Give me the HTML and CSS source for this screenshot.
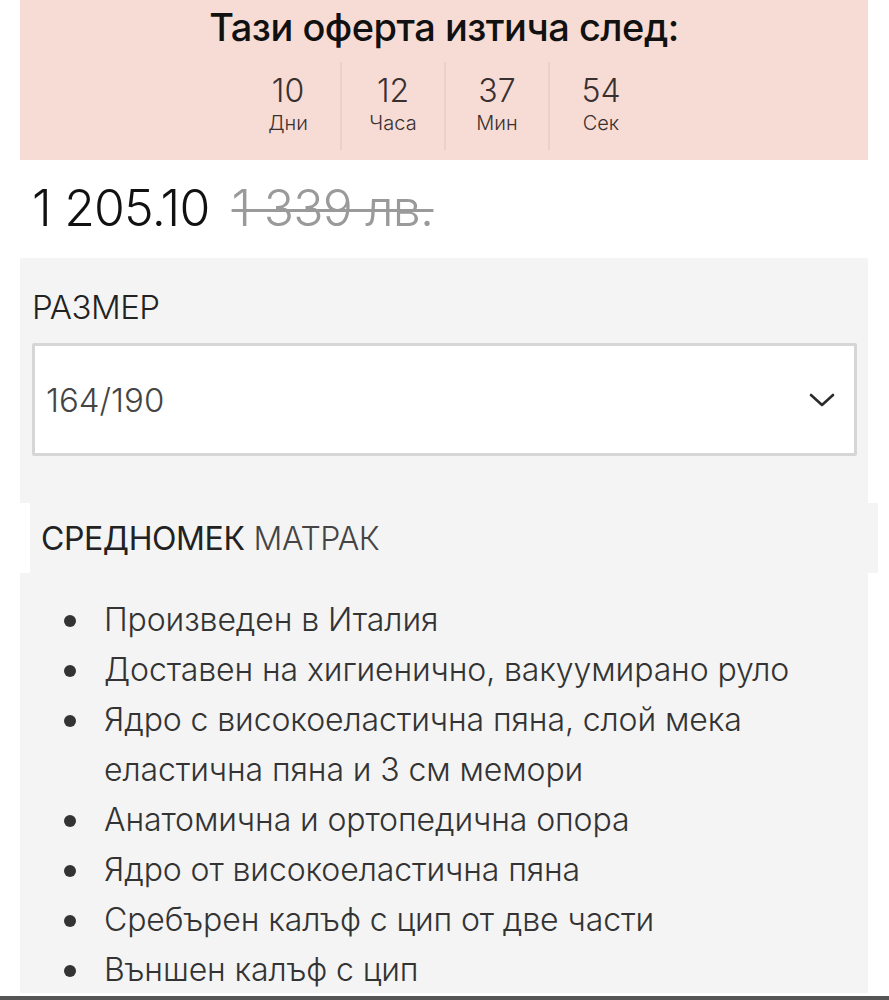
FILE: index.html
```html
<!DOCTYPE html>
<html lang="bg">
<head>
    <meta charset="UTF-8">
    <meta name="viewport" content="width=device-width, initial-scale=1.0">
    <title>Среднотвърд матрак</title>
    <link rel="stylesheet" href="styles.css">
</head>
<body>
    <div class="product">
        <div class="offer">
            <div class="offer-title">Тази оферта изтича след:</div>
            <div class="countdown">
                <div class="countdown-cell">
                    <div class="countdown-num">10</div>
                    <div class="countdown-label">Дни</div>
                </div>
                <div class="countdown-cell">
                    <div class="countdown-num">12</div>
                    <div class="countdown-label">Часа</div>
                </div>
                <div class="countdown-cell">
                    <div class="countdown-num">37</div>
                    <div class="countdown-label">Мин</div>
                </div>
                <div class="countdown-cell">
                    <div class="countdown-num">54</div>
                    <div class="countdown-label">Сек</div>
                </div>
            </div>
        </div>

        <div class="price">
            <span class="price-new">1 205.10</span>
            <span class="price-old">1 339 лв.</span>
        </div>

        <div class="options">
            <div class="options-label">РАЗМЕР</div>
            <div class="select">
                <span class="select-value">164/190</span>
                <svg class="select-arrow" width="28" height="16" viewBox="0 0 28 16">
                    <path d="M3 3 L14 13 L25 3" fill="none" stroke="#2b2b2b" stroke-width="2.6" stroke-linecap="round" stroke-linejoin="round"/>
                </svg>
            </div>
        </div>

        <div class="subtitle">
            <span class="subtitle-strong">СРЕДНОМЕК</span> МАТРАК
        </div>

        <div class="features">
            <ul>
                <li>Произведен в Италия</li>
                <li>Доставен на хигиенично, вакуумирано руло</li>
                <li>Ядро с високоеластична пяна, слой мека еластична пяна и 3 см мемори</li>
                <li>Анатомична и ортопедична опора</li>
                <li>Ядро от високоеластична пяна</li>
                <li>Сребърен калъф с цип от две части</li>
                <li>Външен калъф с цип</li>
            </ul>
        </div>
    </div>
    <div class="bottom-line"></div>
</body>
</html>
```

FILE: styles.css
```css
* {
    box-sizing: border-box;
    margin: 0;
    padding: 0;
}

body {
    background-color: #ffffff;
    font-family: Inter, "Noto Sans", sans-serif;
    color: #222;
    overflow: hidden;
    height: 1000px;
    display: flex;
    flex-direction: column;
}

.product {
    width: 848px;
    margin: 0 20px;
    flex: 1;
}

/* оферта */
.offer {
    background-color: #f7dcd5;
    height: 160px;
    padding-top: 2px;
}

.offer-title {
    text-align: center;
    font-size: 38px;
    font-weight: 500;
    color: #111;
    line-height: 50px;
    letter-spacing: -0.5px;
}

.countdown {
    display: flex;
    justify-content: center;
    margin-top: 10px;
}

.countdown-cell {
    width: 104px;
    height: 88px;
    text-align: center;
    border-left: 2px solid #ecd0c8;
    padding-top: 11px;
}

.countdown-cell:first-child {
    border-left: none;
}

.countdown-num {
    font-size: 32px;
    font-weight: 300;
    line-height: 36px;
    color: #3a3030;
}

.countdown-label {
    font-size: 20px;
    font-weight: 300;
    line-height: 28px;
    color: #3a3030;
}

/* цена */
.price {
    height: 98px;
    display: flex;
    align-items: center;
    padding-left: 12px;
    padding-bottom: 2px;
    gap: 22px;
}

.price-new {
    font-size: 50px;
    font-weight: 300;
    color: #111;
    letter-spacing: -0.8px;
}

.price-old {
    font-size: 50px;
    font-weight: 300;
    color: #9a9a9a;
    text-decoration: line-through;
    text-decoration-thickness: 3px;
    letter-spacing: -0.8px;
}

/* размер */
.options {
    background-color: #f4f4f4;
    padding: 28px 11px 47px 12px;
}

.options-label {
    font-size: 33px;
    font-weight: 300;
    line-height: 42px;
    color: #222;
    letter-spacing: -0.5px;
}

.select {
    margin-top: 15px;
    height: 113px;
    background-color: #fff;
    border: 3px solid #d6d6d6;
    border-radius: 2px;
    display: flex;
    align-items: center;
    justify-content: space-between;
    padding: 0 18px 0 11px;
}

.select-value {
    font-size: 33px;
    font-weight: 300;
    color: #444;
}

/* описание */
.subtitle {
    margin-left: 10px;
    margin-right: -10px;
    height: 70px;
    background-color: #f4f4f4;
    display: flex;
    align-items: center;
    gap: 9px;
    padding-left: 11px;
    font-size: 32px;
    font-weight: 300;
    color: #444;
    letter-spacing: -0.4px;
}

.subtitle-strong {
    color: #222;
    font-weight: 400;
}

.features {
    background-color: #f4f4f4;
    height: 420px;
    padding: 22px 40px 0 0;
}

.features ul {
    list-style: none;
    padding-left: 84px;
}

.features li {
    position: relative;
    font-size: 32px;
    font-weight: 300;
    line-height: 50px;
    color: #333;
    letter-spacing: -0.1px;
}

.features li::before {
    content: "";
    position: absolute;
    left: -40px;
    top: 20px;
    width: 12px;
    height: 12px;
    border-radius: 50%;
    background-color: #333;
}

.bottom-line {
    height: 4px;
    background-color: #555;
}
```
